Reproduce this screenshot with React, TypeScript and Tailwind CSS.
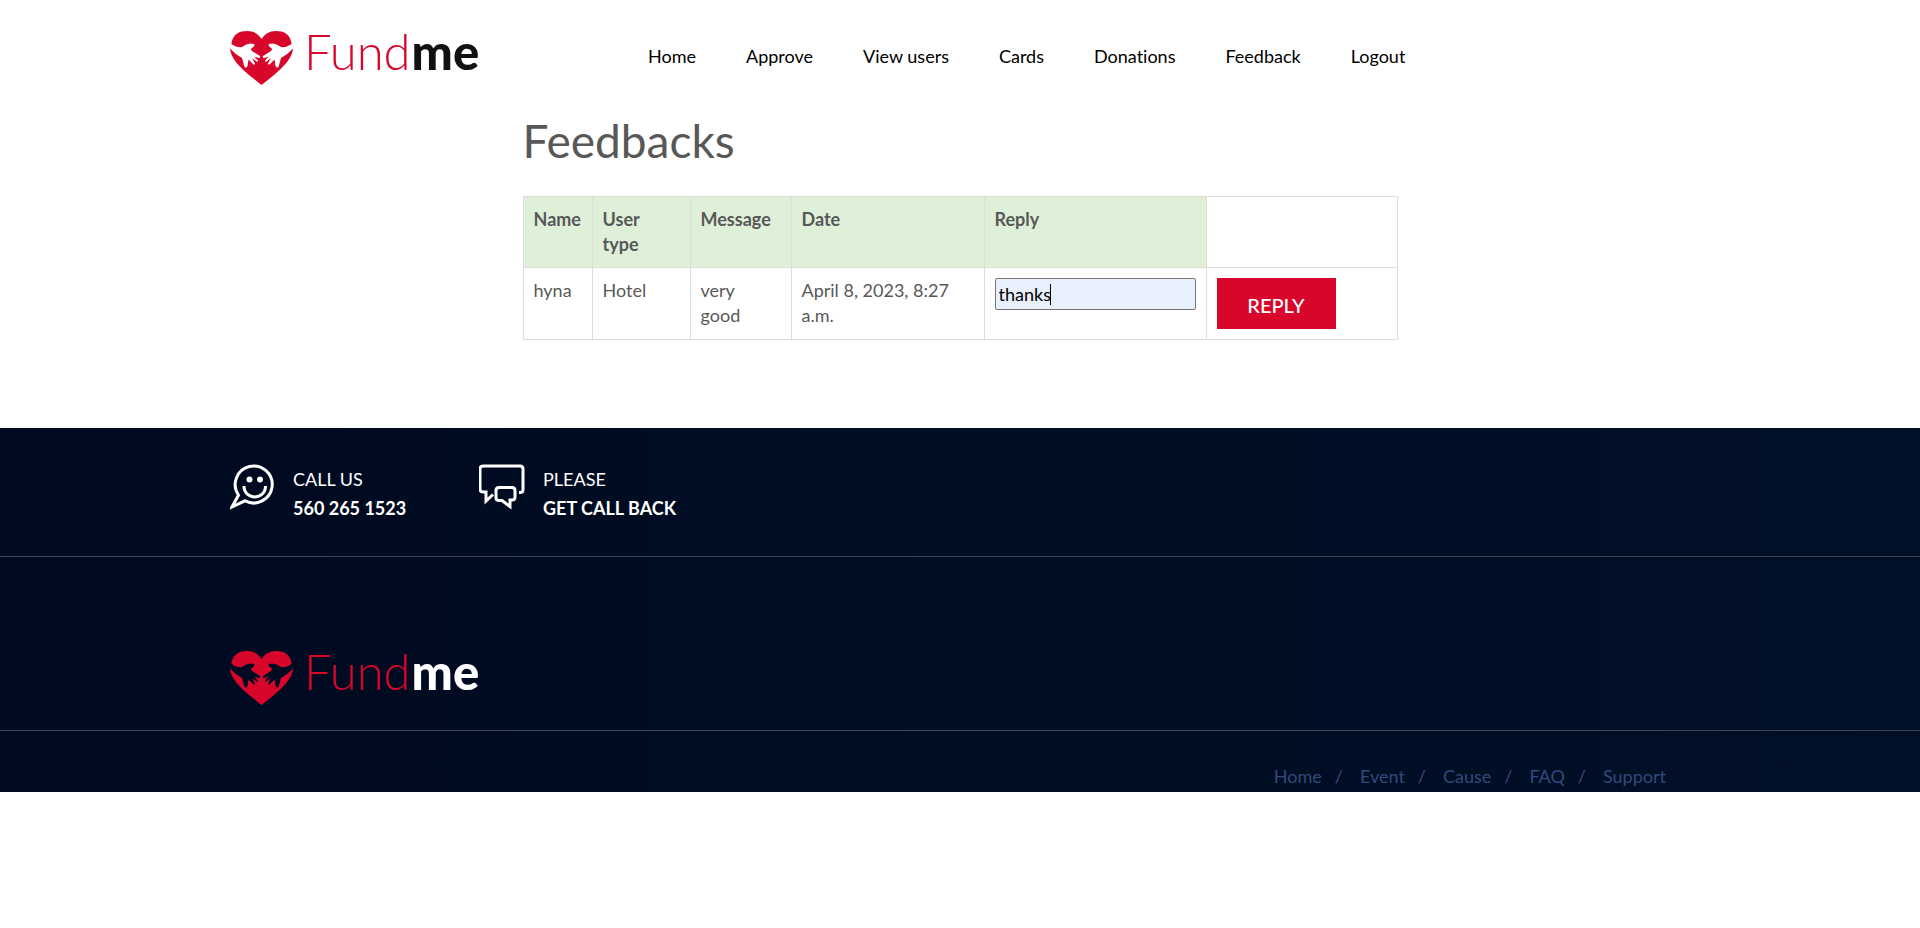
import React from "react";

const navItems = ["Home", "Approve", "View users", "Cards", "Donations", "Feedback", "Logout"];
const footerItems = ["Home", "Event", "Cause", "FAQ", "Support"];

const handPath =
  "M-1 12L3 15Q8 18 12 17Q18 12 24 14Q25.500 15.500 22 18Q20 19 22 21L30 26Q31 28 28.500 28L24 26.500L28 30.500Q28 32 26.500 31.500L22 28L25 33.500Q24.500 35.500 23 34L18.500 29.500L17.500 36Q16 38.500 14.500 37L12 28Q6 25 0 18.500L-1 18Z";

function Logo({ handClass, accent }: { handClass: string; accent: string }) {
  return (
    <a href="#" aria-label="Fundme" className="flex items-start">
      <svg width="64" height="56" viewBox="0 0 64 56" aria-hidden="true">
        <path
          fill="#d9062b"
          d="M31.500 9C35 4 39 1 46 1C54 1 59 4 61 11L63 19C62 29 52 38 44 45L31.500 55L19 45C11 38 1 29 0 19L2 11C4 4 9 1 17 1C24 1 28 4 31.500 9Z"
        />
        <g className={handClass}>
          <path d={handPath} />
          <path d={handPath} transform="translate(63 0) scale(-1 1)" />
        </g>
      </svg>
      <span aria-hidden="true" className="ml-[10px] flex items-baseline text-[49px] leading-[42px]">
        <span className="font-light text-[#d9062b]">Fund</span>
        <span className={accent}>me</span>
      </span>
    </a>
  );
}

function SmileIcon() {
  return (
    <svg width="46" height="46" viewBox="0 0 46 46" fill="none" stroke="white" strokeWidth="3" aria-hidden="true">
      <path d="M8.500 31A18.500 18.500 0 1 1 15 36.800L2 43Z" />
      <path d="M14 22C14 36.500 35.500 36.500 35.500 22" />
      <circle cx="19.500" cy="15.500" r="3" fill="white" stroke="none" />
      <circle cx="30" cy="15.500" r="3" fill="white" stroke="none" />
    </svg>
  );
}

function ChatIcon() {
  return (
    <svg width="46" height="46" viewBox="0 0 46 46" fill="none" stroke="white" strokeWidth="3" aria-hidden="true">
      <path d="M40 28.500H41Q44 28.500 44 25.500V5Q44 2 41 2H4Q1 2 1 5V25Q1 28 4 28H7V37L14 30.500" />
      <path d="M20 23.500H33Q36 23.500 36 26.500V33Q36 36 33 36H31V42.500L23 36.500H20Q17 36.500 17 33.500V26.500Q17 23.500 20 23.500Z" />
    </svg>
  );
}

export default function App() {
  return (
    <div className="bg-white font-['Lato',sans-serif] text-lg leading-[25px] text-[#585858] [font-variant-ligatures:none]">
      <header className="mx-auto flex max-w-[1460px] items-start pt-[30px]">
        <div className="w-[418px] shrink-0">
          <Logo handClass="fill-white" accent="pl-px font-black text-[#111111]" />
        </div>
        <nav className="flex gap-[50px] pt-[14px] text-black">
          {navItems.map((item) => (
            <a key={item} href="#">{item}</a>
          ))}
        </nav>
      </header>

      <main className="mx-auto w-full max-w-[875px] pb-[88px] pt-[23px]">
        <h1 className="text-[46px] leading-[64px]">Feedbacks</h1>
        <table className="mt-[23px] w-full table-fixed border-collapse text-left">
          <colgroup>
            <col className="w-[69px]" />
            <col className="w-[98px]" />
            <col className="w-[101px]" />
            <col className="w-[193px]" />
            <col className="w-[222px]" />
            <col />
          </colgroup>
          <thead>
            <tr className="align-top">
              {["Name", "User type", "Message", "Date", "Reply"].map((h) => (
                <th key={h} scope="col" className="border border-[#dddddd] bg-[#dff0d8] p-[10px] font-bold">{h}</th>
              ))}
              <td className="border border-[#dddddd]" />
            </tr>
          </thead>
          <tbody>
            <tr className="align-top">
              <td className="border border-[#dddddd] p-[10px]">hyna</td>
              <td className="border border-[#dddddd] p-[10px]">Hotel</td>
              <td className="border border-[#dddddd] py-[10px] pl-[10px] pr-5">very good</td>
              <td className="border border-[#dddddd] p-[10px]">April 8, 2023, 8:27 a.m.</td>
              <td className="border border-[#dddddd] p-[10px]">
                <div className="relative">
                  <input
                    aria-label="Reply"
                    defaultValue="thanks"
                    className="block h-8 w-full rounded-[2px] border border-[#767676] bg-[#e8f0fe] px-[3px] text-black outline-none"
                  />
                  <span className="absolute left-[55px] top-[6px] h-[21px] w-px bg-black" />
                </div>
              </td>
              <td className="border border-[#dddddd] p-[10px]">
                <button type="button" className="block h-[51px] w-[119px] bg-[#d9062b] pt-[3px] text-xl font-medium text-white">REPLY</button>
              </td>
            </tr>
          </tbody>
        </table>
      </main>

      <footer className="bg-linear-to-r from-[#000a20] to-[#001027] pb-[3px]">
        <div className="border-b border-[#3d455a] pb-[33px] pt-9">
          <div className="mx-auto flex max-w-[1460px] text-white">
            <div className="flex w-[249px] gap-[17px]">
              <SmileIcon />
              <p className="pt-px leading-[29px]">CALL US<br /><strong>560 265 1523</strong></p>
            </div>
            <div className="flex gap-[18px]">
              <ChatIcon />
              <p className="pt-px leading-[29px]">PLEASE<br /><strong>GET CALL BACK</strong></p>
            </div>
          </div>
        </div>
        <div className="border-b border-[#3d455a] pb-6 pt-[93px]">
          <div className="mx-auto max-w-[1460px]">
            <Logo handClass="fill-[#000b21]" accent="pl-px font-black text-white" />
          </div>
        </div>
        <div className="mx-auto max-w-[1460px] pr-6 pt-[33px]">
          <nav className="flex justify-end text-[#34487c]">
            {footerItems.map((item, i) => (
              <span key={item} className="flex">
                {i > 0 && <span className="pl-[13px] pr-[17px]">/</span>}
                <a href="#">{item}</a>
              </span>
            ))}
          </nav>
        </div>
      </footer>
    </div>
  );
}
